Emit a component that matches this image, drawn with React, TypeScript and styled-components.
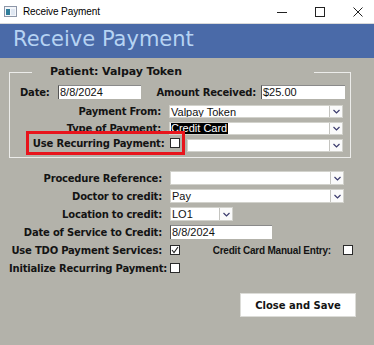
import React from "react";
import styled, { createGlobalStyle } from "styled-components";

const GlobalStyle = createGlobalStyle`
  html, body {
    margin: 0;
    padding: 0;
  }
  body {
    width: 374px;
    height: 345px;
    overflow: hidden;
    background: #b3b2aa;
  }
`;

const Window = styled.div`
  width: 374px;
  height: 345px;
  display: flex;
  flex-direction: column;
  background: #b3b2aa;
  font-family: "DejaVu Sans", Verdana, sans-serif;
  color: #141414;
`;

const TitleBar = styled.div`
  height: 24px;
  box-sizing: border-box;
  background: #ffffff;
  border-bottom: 1px solid #d9d9d9;
  display: flex;
  align-items: center;
  padding-left: 4px;
`;

const TitleText = styled.span`
  margin-left: 6px;
  font-family: "Liberation Sans", Arial, sans-serif;
  font-size: 10px;
  letter-spacing: -0.1px;
  color: #000;
`;

const Controls = styled.div`
  margin-left: auto;
  display: flex;
  align-items: center;
  gap: 28px;
  padding-right: 11px;

  svg {
    display: block;
  }
`;

const Header = styled.div`
  height: 34px;
  line-height: 30px;
  background: #4a6aa8;
  color: #b6d3f3;
  font-size: 21px;
  padding-left: 13px;
`;

const Body = styled.div`
  flex: 1;
  padding: 7px 0 0 9px;
`;

const GroupBox = styled.fieldset`
  margin: 0;
  width: 342px;
  min-width: 0;
  box-sizing: border-box;
  border: 1px solid #ececea;
  padding: 6px 0 5px 0;
`;

const Legend = styled.legend`
  margin-left: 22px;
  width: 282px;
  box-sizing: border-box;
  padding: 0 0 0 18px;
  height: 14px;
  line-height: 14px;
  font-size: 11px;
  font-weight: bold;
  letter-spacing: -0.1px;
`;

const DateRow = styled.div`
  display: flex;
  align-items: center;
  height: 14px;
  padding: 0 5px 0 10px;
  margin-bottom: 6px;
`;

const Label = styled.label<{ $width?: number }>`
  font-size: 10px;
  font-weight: bold;
  letter-spacing: -0.2px;
  white-space: nowrap;
  ${(p) => (p.$width ? `width: ${p.$width}px;` : "")}
`;

const GrowLabel = styled(Label)`
  flex: 1;
  text-align: right;
  padding-right: 5px;
`;

const NarrowLabel = styled(Label)`
  font-family: "Liberation Sans", Arial, sans-serif;
  font-size: 10px;
  letter-spacing: -0.2px;
`;

const TextBox = styled.div<{ $width: number }>`
  width: ${(p) => p.$width}px;
  height: 100%;
  box-sizing: border-box;
  background: #ffffff;
  border-top: 1px solid #8a8a8a;
  border-left: 1px solid #555;
  padding-left: 1px;
  font-family: "Liberation Sans", Arial, sans-serif;
  font-size: 11px;
  line-height: 13px;
  color: #111;
  overflow: hidden;
`;

const PaymentRows = styled.div`
  display: grid;
  grid-template-columns: 151px 174px;
  grid-auto-rows: 13px;
  column-gap: 8px;
  row-gap: 4px;
  align-items: center;
`;

const RecurringRow = styled.div`
  grid-column: 1 / span 2;
  display: flex;
  align-items: flex-start;
  height: 13px;
  padding-left: 19px;
`;

const Highlight = styled.div`
  width: 153px;
  height: 18px;
  margin-top: -5px;
  box-sizing: border-box;
  outline: 3px solid #e8141c;
  display: flex;
  align-items: center;
  justify-content: flex-end;
  gap: 5px;
  padding-right: 2px;
`;

const RightLabel = styled(Label)`
  text-align: right;
`;

const SelectBox = styled.div<{ $width: number; $offset?: number }>`
  width: ${(p) => p.$width}px;
  margin-left: ${(p) => p.$offset ?? 0}px;
  height: 100%;
  box-sizing: border-box;
  display: flex;
  background: #ffffff;
  border: 1px solid #d2d2cc;
`;

const SelectValue = styled.div`
  flex: 1;
  display: flex;
  align-items: center;
  font-family: "Liberation Sans", Arial, sans-serif;
  font-size: 11px;
  color: #111;
  padding-left: 1px;
  overflow: hidden;
  white-space: nowrap;
`;

const Selected = styled.span`
  background: #000;
  color: #fff;
  line-height: 11px;
  padding-right: 1px;
`;

const DropButton = styled.div`
  width: 13px;
  box-sizing: border-box;
  border-left: 1px solid #c4c4c0;
  background: #fafafa;
  display: flex;
  align-items: center;
  justify-content: center;
`;

const Check = styled.div`
  width: 10px;
  height: 10px;
  flex: none;
  box-sizing: border-box;
  background: #ffffff;
  border: 1px solid #2a2a2a;
  display: flex;
  align-items: center;
  justify-content: center;
`;

const LowerForm = styled.div`
  margin-top: 13px;
  display: grid;
  grid-template-columns: 153px 183px;
  grid-auto-rows: 14px;
  column-gap: 8px;
  row-gap: 4px;
  align-items: center;
`;

const FieldCell = styled.div`
  height: 100%;
  display: flex;
  align-items: center;
`;

const SplitCell = styled(FieldCell)`
  justify-content: space-between;
`;

const Inline = styled.div`
  display: flex;
  align-items: center;
  gap: 12px;
`;

const ButtonRow = styled.div`
  display: flex;
  justify-content: flex-end;
  padding-right: 18px;
  margin-top: 18px;
`;

const SaveButton = styled.button`
  width: 116px;
  height: 24px;
  background: #ffffff;
  border: 1px solid #dcdcd8;
  font-family: "DejaVu Sans", Verdana, sans-serif;
  font-size: 10px;
  font-weight: bold;
  color: #141414;
  padding: 0;
  cursor: pointer;
`;

const Chevron = () => (
  <svg width="7" height="5" viewBox="0 0 7 5">
    <path d="M0.5 1 L3.5 4 L6.5 1" fill="none" stroke="#3c3c6e" strokeWidth="1.2" />
  </svg>
);

const Select = ({
  width,
  value,
  selected,
  offset,
}: {
  width: number;
  value?: string;
  selected?: boolean;
  offset?: number;
}) => (
  <SelectBox $width={width} $offset={offset}>
    <SelectValue>{selected ? <Selected>{value}</Selected> : value}</SelectValue>
    <DropButton>
      <Chevron />
    </DropButton>
  </SelectBox>
);

const CheckBox = ({ checked }: { checked?: boolean }) => (
  <Check>
    {checked && (
      <svg width="8" height="8" viewBox="0 0 8 8">
        <path d="M1 4 L3 6.5 L7 1" fill="none" stroke="#222" strokeWidth="1.1" />
      </svg>
    )}
  </Check>
);

const AppIcon = () => (
  <svg width="13" height="11" viewBox="0 0 13 11">
    <rect x="0.5" y="0.5" width="12" height="10" fill="#f4f6fa" stroke="#8d96a8" />
    <rect x="2" y="3" width="4" height="6" fill="#2f7d9a" />
    <rect x="7" y="3" width="4" height="6" fill="#dfe7f2" />
  </svg>
);

export default function App() {
  return (
    <>
      <GlobalStyle />
      <Window>
        <TitleBar>
          <AppIcon />
          <TitleText>Receive Payment</TitleText>
          <Controls>
            <svg width="10" height="10" viewBox="0 0 10 10">
              <path d="M0 5.5 H10" stroke="#222" strokeWidth="1" />
            </svg>
            <svg width="10" height="10" viewBox="0 0 10 10">
              <rect x="0.5" y="0.5" width="9" height="9" fill="none" stroke="#222" strokeWidth="1" />
            </svg>
            <svg width="10" height="10" viewBox="0 0 10 10">
              <path d="M0.5 0.5 L9.5 9.5 M9.5 0.5 L0.5 9.5" stroke="#222" strokeWidth="1" />
            </svg>
          </Controls>
        </TitleBar>
        <Header>Receive Payment</Header>
        <Body>
          <GroupBox>
            <Legend>Patient: Valpay Token</Legend>
            <DateRow>
              <Label $width={38}>Date:</Label>
              <TextBox $width={83}>8/8/2024</TextBox>
              <GrowLabel>Amount Received:</GrowLabel>
              <TextBox $width={84}>$25.00</TextBox>
            </DateRow>
            <PaymentRows>
              <RightLabel>Payment From:</RightLabel>
              <Select width={174} value="Valpay Token" />
              <RightLabel>Type of Payment:</RightLabel>
              <Select width={174} value="Credit Card" selected />
              <RecurringRow>
                <Highlight>
                  <Label>Use Recurring Payment:</Label>
                  <CheckBox />
                </Highlight>
                <Select width={157} offset={5} />
              </RecurringRow>
            </PaymentRows>
          </GroupBox>
          <LowerForm>
            <RightLabel>Procedure Reference:</RightLabel>
            <FieldCell>
              <Select width={174} />
            </FieldCell>
            <RightLabel>Doctor to credit:</RightLabel>
            <FieldCell>
              <Select width={174} value="Pay" />
            </FieldCell>
            <RightLabel>Location to credit:</RightLabel>
            <FieldCell>
              <Select width={63} value="LO1" />
            </FieldCell>
            <RightLabel>Date of Service to Credit:</RightLabel>
            <FieldCell>
              <TextBox $width={102}>8/8/2024</TextBox>
            </FieldCell>
            <RightLabel>Use TDO Payment Services:</RightLabel>
            <SplitCell>
              <CheckBox checked />
              <Inline>
                <NarrowLabel>Credit Card Manual Entry:</NarrowLabel>
                <CheckBox />
              </Inline>
            </SplitCell>
            <RightLabel>Initialize Recurring Payment:</RightLabel>
            <FieldCell>
              <CheckBox />
            </FieldCell>
          </LowerForm>
          <ButtonRow>
            <SaveButton>Close and Save</SaveButton>
          </ButtonRow>
        </Body>
      </Window>
    </>
  );
}
